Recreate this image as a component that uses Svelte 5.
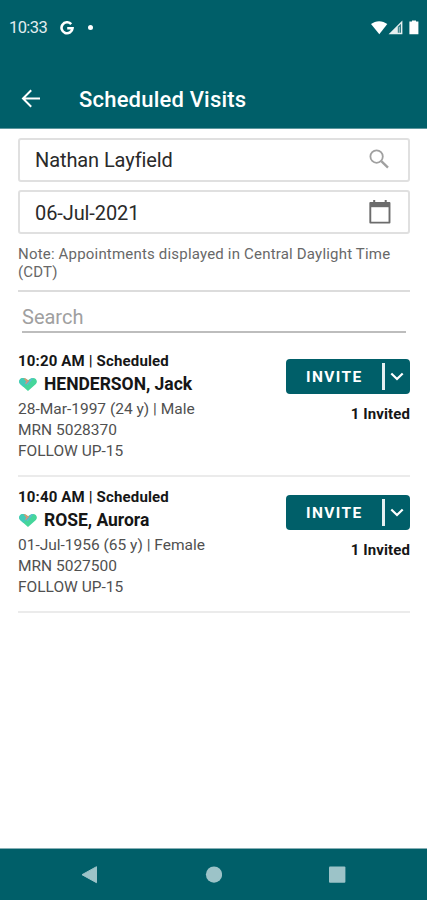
<script>
  const visits = [
    { time: '10:20 AM', status: 'Scheduled', name: 'HENDERSON, Jack', details: '28-Mar-1997 (24 y) | Male', mrn: 'MRN 5028370', type: 'FOLLOW UP-15', invited: '1 Invited' },
    { time: '10:40 AM', status: 'Scheduled', name: 'ROSE, Aurora', details: '01-Jul-1956 (65 y) | Female', mrn: 'MRN 5027500', type: 'FOLLOW UP-15', invited: '1 Invited' }
  ];
</script>

<div class="screen">
  <header>
    <div class="status">
      <span class="clock">10:33</span>
      <svg class="google" width="14" height="14" viewBox="0 0 14 14"><path d="M11.2 3.2A5.5 5.5 0 1 0 12.5 7.3H7.2" fill="none" stroke="#fff" stroke-width="2.6" /></svg>
      <i class="dot"></i>
      <svg class="signals" width="49" height="16" viewBox="0 0 49 16">
        <path d="M0 4.1C4.6.2 11.7.2 16.3 4.1L8.3 14.3Z" fill="#fff" />
        <path d="M17.6 14.2 31.4.6V14.2Z" fill="#fff" fill-opacity=".9" />
        <path d="M26.8 6.8 30 3.8V12.8H26.8Z" fill="#005f69" fill-opacity=".8" />
        <path d="M28.3 7v5.8" stroke="#fff" stroke-opacity=".55" />
        <path d="M39 1.6h2V.4h4v1.2h2.4v12.6h-9V1.6Z" fill="#fff" />
      </svg>
    </div>
    <div class="appbar">
      <svg width="20" height="20" viewBox="0 0 20 20" fill="none" stroke="#fff" stroke-width="2"><path d="M19 9.5H2.5M10.2 1.3 2 9.5l8.2 8.2" /></svg>
      <h1>Scheduled Visits</h1>
    </div>
  </header>

  <main>
    <div class="field">
      <span class="provider">Nathan Layfield</span>
      <svg width="24" height="24" viewBox="0 0 24 24" fill="none" stroke="#a0a0a0"><circle cx="8.6" cy="8.6" r="6.2" stroke-width="1.8" /><path d="m13.3 13.2 6.7 6.5" stroke-width="2.4" /></svg>
    </div>
    <div class="field">
      <span class="date">06-Jul-2021</span>
      <svg width="24" height="26" viewBox="0 0 24 26"><path d="M2.3 4h19.2v19.6H2.3Z" fill="none" stroke="#6c6c6c" stroke-width="1.9" stroke-linejoin="round" /><path d="M2 3.4h20v4.8H2Z" fill="#6c6c6c" /><path d="M6.2 1v4M17.7 1v4" stroke="#6c6c6c" stroke-width="2" /></svg>
    </div>
    <p class="note">Note: Appointments displayed in Central Daylight Time<br />(CDT)</p>
    <div class="search"><span>Search</span></div>

    {#each visits as visit}
      <article>
        <div class="info">
          <div class="time">{visit.time} | {visit.status}</div>
          <div class="name">
            <svg width="19" height="15" viewBox="-.5 0 19 15">
              <path d="M9.5 14 1.6 6.9C-.7 4.3 1.4.9 4.6 1c2 0 3.6 1 4.9 2.3C10.8 2 12.4 1 14.4 1c3.2-.1 5.3 3.3 3 5.9Z" fill="#45d69b" />
              <path d="M5 9.9 1.6 6.9C-.7 4.3 1.4.9 4.6 1l1.2.1 3.4 4.4Z" fill="#42cbb8" />
              <path d="M5 1q2.3.1 4.5 2.3L7.9 5Z" fill="#d79a6e" />
              <path d="M6.6 6 9.9 2.9 10.9 3.4 7.3 7.3Z" fill="#e58585" />
              <path d="M8 7.6 12.9 1.2 15 1.1 9.2 8.3Z" fill="#56bfd0" />
            </svg>
            <span>{visit.name}</span>
          </div>
          <div class="line details">{visit.details}</div>
          <div class="line mrn">{visit.mrn}</div>
          <div class="line type">{visit.type}</div>
        </div>
        <div class="actions">
          <div class="button">
            <span class="label">INVITE</span>
            <i></i>
            <svg width="14" height="9" viewBox="0 0 14 9"><path d="m1.3 1.5 5.7 5.5 5.7-5.5" fill="none" stroke="#fff" stroke-width="2.2" /></svg>
          </div>
          <div class="invited">{visit.invited}</div>
        </div>
      </article>
    {/each}
  </main>

  <nav>
    <svg width="17" height="20" viewBox="0 0 17 20"><path d="M15.5 1.7v16L1 9.7Z" fill="#9cc3c8" stroke="#9cc3c8" stroke-linejoin="round" /></svg>
    <svg width="17" height="18" viewBox="0 0 17 18"><circle cx="9" cy="8.6" r="8.1" fill="#9cc3c8" /></svg>
    <svg width="17" height="18" viewBox="0 0 17 18"><rect x="0" y=".4" width="16.4" height="16.4" rx="1" fill="#9cc3c8" /></svg>
  </nav>
</div>

<style>
  .screen {
    width: 427px;
    height: 900px;
    display: flex;
    flex-direction: column;
    overflow: hidden;
    background: #fff;
    color: #161616;
    font-family: Roboto, sans-serif;
    white-space: nowrap;
  }
  svg { display: block; flex: none; }
  header { height: 129px; box-sizing: border-box; flex: none; background: #005f69; border-bottom: 1px solid #5d979e; color: #fff; }
  .status { height: 55px; display: flex; align-items: center; padding-left: 9px; }
  .clock { width: 51px; font-size: 16.5px; letter-spacing: -.6px; color: #e1edef; }
  .dot { width: 5px; height: 5px; margin-left: 14px; border-radius: 50%; background: #fff; }
  .signals { margin: 0 7px 0 auto; }
  .appbar { display: flex; align-items: flex-start; padding: 34px 0 0 21px; }
  h1 { margin: 0 0 0 38px; font-size: 22px; line-height: 22px; font-weight: 500; letter-spacing: .2px; }
  main { flex: 1; padding: 9px 17px 0 18px; }
  .field {
    height: 44px; margin-bottom: 8px; box-sizing: border-box; display: flex; align-items: center; justify-content: space-between;
    padding: 0 16px 0 15px; border: 2px solid #e0e0e0; border-radius: 3px; font-size: 20px; letter-spacing: -.1px; color: #2a2a2a;
  }
  .date { padding-top: 1px; }
  .note { margin: 11px 0 0; height: 45px; border-bottom: 2px solid #dcdcdc; font-size: 15px; line-height: 18px; letter-spacing: .19px; color: #686868; }
  .search { height: 39px; margin: 0 4px 18px; border-bottom: 2px solid #bdbdbd; font-size: 20px; line-height: 50px; color: #a0a0a0; }
  article { height: 126px; box-sizing: border-box; display: flex; justify-content: space-between; margin-bottom: 10px; border-bottom: 2px solid #ebebeb; }
  .time { height: 20px; font-size: 15px; line-height: 20px; font-weight: 700; letter-spacing: .16px; }
  .name { height: 26px; display: flex; align-items: center; gap: 7px; font-size: 17.5px; font-weight: 700; letter-spacing: -.02px; }
  .line { height: 21px; line-height: 25px; font-size: 15.5px; color: #505050; }
  .actions { padding-top: 8px; }
  .button { width: 124px; height: 35px; display: flex; align-items: center; border-radius: 4px; background: #005f69; color: #fff; }
  .label { width: 76px; padding-left: 20px; font-size: 15.5px; font-weight: 700; letter-spacing: 1.4px; }
  .button i { width: 3px; height: 27px; margin-right: 5px; background: #e6f0f1; }
  .invited { margin-top: 10px; font-size: 15px; line-height: 20px; font-weight: 700; letter-spacing: .1px; text-align: right; }
  nav { height: 52px; flex: none; box-sizing: border-box; border-top: 1px solid #87b0b5; background: #005f69; display: flex; align-items: center; padding: 0 0 0 81px; gap: 107px; }
</style>
